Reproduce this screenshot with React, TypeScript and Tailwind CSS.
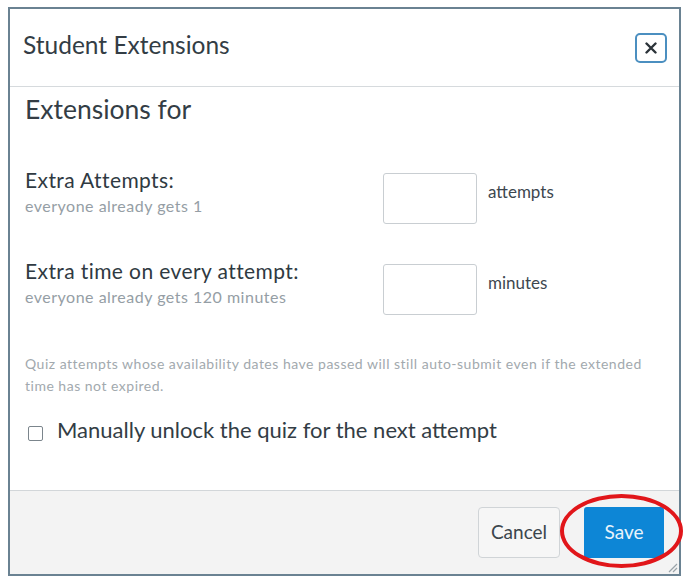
import React from "react";

const font = { fontFamily: "Lato, 'Open Sans', sans-serif" };

const Row = ({ label, hint, unit }: { label: string; hint: string; unit: string }) => (
  <div className="flex items-start">
    <div className="w-[358px]">
      <div className="text-[21px] leading-[25px] tracking-[0.4px] text-[#2f3a42]">{label}</div>
      <div className="mt-[4px] text-[16px] leading-[19px] tracking-[0.5px] text-[#959ea5]">{hint}</div>
    </div>
    <input
      type="text"
      className="mt-[6px] h-[51px] w-[94px] rounded-[3px] border border-[#c9ced2] bg-white"
    />
    <div className="ml-[11px] mt-[15px] text-[17px] leading-[20px] text-[#3d474f]">{unit}</div>
  </div>
);

export default function App() {
  return (
    <div className="min-h-[583px] bg-white pl-[8px] pt-[7px]" style={font}>
      <div className="relative flex h-[569px] w-[673px] flex-col border-2 border-[#6a8292] bg-white">
        {/* header */}
        <div className="flex h-[78px] items-center justify-between border-b border-[#d6dadd] pl-[13px] pr-[12px]">
          <h1 className="mb-[6px] text-[24.5px] leading-[29px] text-[#333d45]">Student Extensions</h1>
          <button className="flex h-[30px] w-[32px] items-center justify-center rounded-[5px] border-2 border-[#4b8fc0] bg-white">
            <svg width="12" height="12" viewBox="0 0 12 12">
              <path d="M1.5 1.5 L10.5 10.5 M10.5 1.5 L1.5 10.5" stroke="#2b3339" strokeWidth="2.4" strokeLinecap="round" />
            </svg>
          </button>
        </div>

        {/* body */}
        <div className="flex-1 pl-[15px] pr-[15px] pt-[7px]">
          <h2 className="text-[26.5px] leading-[30px] text-[#333d45]">Extensions for</h2>

          <div className="mt-[43px] flex flex-col gap-[34px]">
            <Row label="Extra Attempts:" hint="everyone already gets 1" unit="attempts" />
            <Row label="Extra time on every attempt:" hint="everyone already gets 120 minutes" unit="minutes" />
          </div>

          <p className="mt-[38px] text-[14px] leading-[22px] tracking-[0.5px] text-[#a2a9ae]">
            Quiz attempts whose availability dates have passed will still auto-submit even if the extended
            time has not expired.
          </p>

          <label className="mt-[20px] flex items-start">
            <span className="ml-[3px] mt-[9px] h-[15px] w-[15px] shrink-0 rounded-[2px] border-[1.5px] border-[#7b858c] bg-white" />
            <span className="ml-[14px] text-[22px] leading-[26px] text-[#333d45]">
              Manually unlock the quiz for the next attempt
            </span>
          </label>
        </div>

        {/* footer */}
        <div className="flex h-[84px] items-center justify-end gap-[24px] border-t border-[#d2d6d9] bg-[#f3f3f3] pr-[15px]">
          <button className="h-[51px] w-[82px] rounded-[4px] border border-[#d0d4d7] bg-[#f6f6f6] text-[19px] text-[#3b454c]">
            Cancel
          </button>
          <button className="h-[51px] w-[80px] rounded-[3px] bg-[#0d86d6] text-[19px] text-[#e8f3fb]">
            Save
          </button>
        </div>

        {/* resize grip */}
        <svg className="absolute bottom-[1px] right-[1px]" width="12" height="12" viewBox="0 0 12 12">
          <path d="M11 3 L3 11 M11 7 L7 11" stroke="#9aa3a9" strokeWidth="1.2" />
        </svg>

        {/* red annotation circle */}
        <div className="pointer-events-none absolute left-[550px] top-[485px] h-[74px] w-[123px] rounded-[50%] border-[4px] border-[#e1161a]" />
      </div>
    </div>
  );
}
